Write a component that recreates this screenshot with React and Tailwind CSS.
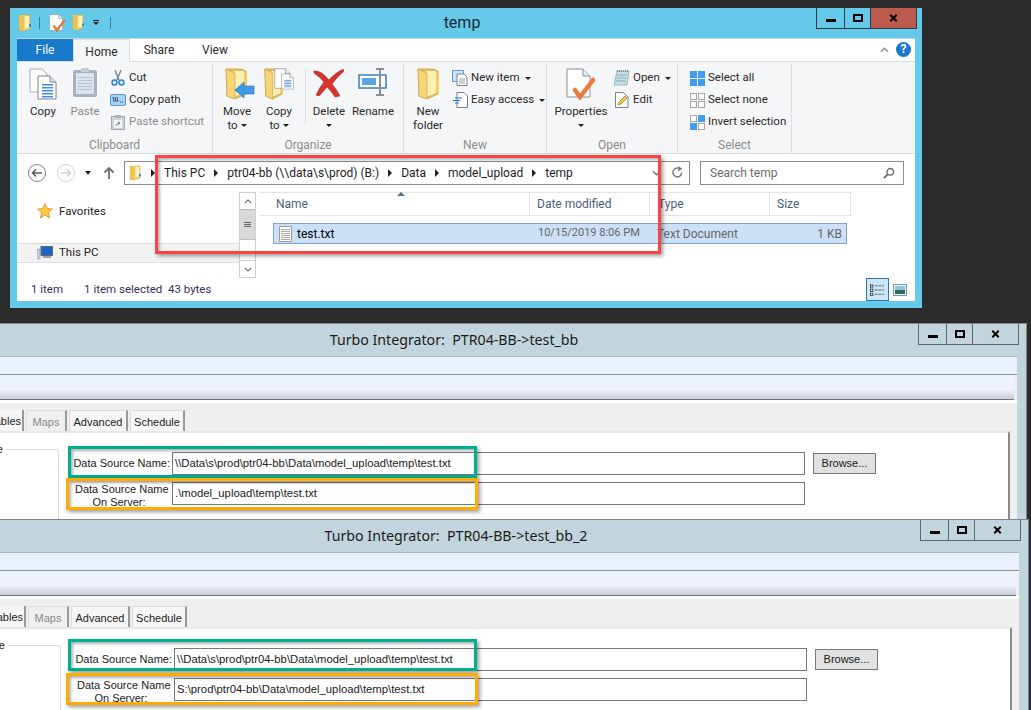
import React from 'react';

const Folder = ({ className = 'w-[23px] h-[32px]' }) => (
  <svg viewBox="0 0 23 32" preserveAspectRatio="none" className={className}>
    <path d="M1 1 H17 L21 3 V26 L10 31 L2 28 Z" fill="#e9bf57" stroke="#b58f35" strokeWidth="0.6" />
    <path d="M9 3 H19 V25 L9 29 Z" fill="#fdf0b4" />
    <path d="M1 1 L10 5 V31 L2 28 Z" fill="#f6d676" stroke="#c39c3e" strokeWidth="0.6" />
    <path d="M19 4 L22 6 V24 L19 25 Z" fill="#f3cf68" />
  </svg>
);

const SmallFolder = ({ className = 'w-[14px] h-[18px]' }) => (
  <svg viewBox="0 0 14 18" className={className}>
    <path d="M1 1 H12 V15 L5 17 L1 16 Z" fill="#f5d672" stroke="#c9a548" strokeWidth="0.5" />
    <path d="M1 1 L6 3 V17 L1 16 Z" fill="#edc352" />
    <path d="M7 2 H11 V13 L7 14 Z" fill="#fdf2bf" />
    <rect x="11" y="10" width="2" height="3" fill="#2f86d6" />
  </svg>
);

const Page = ({ className = 'w-[24px] h-[30px]', lines = true }) => (
  <svg viewBox="0 0 24 30" className={className}>
    <path d="M1 1 H16 L23 8 V29 H1 Z" fill="#fff" stroke="#8a8f96" />
    <path d="M16 1 V8 H23" fill="#e6e8ea" stroke="#8a8f96" />
    {lines && [12, 15, 18, 21, 24].map((y) => <rect key={y} x="6" y={y} width="13" height="1.5" fill="#4f8fd0" />)}
  </svg>
);

const CopyIcon = () => (
  <svg viewBox="0 0 28 32" className="w-[28px] h-[32px]">
    <path d="M1 1 H13 L18 6 V24 H1 Z" fill="#fdfdfd" stroke="#a9aeb4" />
    <path d="M9 8 H21 L27 14 V31 H9 Z" fill="#fff" stroke="#7f858c" />
    <path d="M21 8 V14 H27" fill="#e3e6e9" stroke="#7f858c" />
    {[16, 19, 22, 25, 28].map((y) => <rect key={y} x="13" y={y} width="11" height="1.5" fill="#3e8dd8" />)}
  </svg>
);

const Clipboard = () => (
  <svg viewBox="0 0 26 30" className="w-[26px] h-[30px]">
    <rect x="1" y="2" width="24" height="27" rx="2" fill="#a9b2c2" />
    <rect x="4" y="5" width="18" height="21" fill="#dde3ee" />
    {[9, 12, 15, 18, 21].map((y) => <rect key={y} x="6" y={y} width="14" height="1" fill="#b9c2d2" />)}
    <rect x="9" y="0" width="8" height="4" rx="1" fill="#c7ccd4" />
  </svg>
);

const Scissors = () => (
  <svg viewBox="0 0 16 16" className="w-[16px] h-[16px]">
    <path d="M5 0 L9 10 M11 0 L7 10" stroke="#7d848c" strokeWidth="1.4" />
    <circle cx="4.5" cy="12.5" r="2.5" fill="none" stroke="#2b7fd3" strokeWidth="1.4" />
    <circle cx="11.5" cy="12.5" r="2.5" fill="none" stroke="#2b7fd3" strokeWidth="1.4" />
  </svg>
);

const CopyPathIcon = () => (
  <svg viewBox="0 0 16 12" className="w-[16px] h-[12px]">
    <rect x="0.5" y="0.5" width="15" height="11" rx="1.5" fill="#a9d3fa" stroke="#4f97de" />
    <path d="M3 3 L4 8 M5 3 L6 8 M7 3 L8 8" stroke="#26384d" strokeWidth="0.9" />
    <path d="M10 8 H13.5" stroke="#26384d" strokeDasharray="1 1" />
  </svg>
);

const PasteShortcut = () => (
  <svg viewBox="0 0 14 15" className="w-[14px] h-[15px]">
    <rect x="0.5" y="1.5" width="13" height="13" fill="#cfd3d8" stroke="#a3a8ae" />
    <rect x="4" y="0" width="6" height="3" fill="#b0b5bb" />
    <rect x="3" y="5" width="8" height="8" fill="#f4f5f6" />
    <path d="M5 11 Q5 8 9 8 M7 6.5 L9 8 L7 9.5" stroke="#6f89a6" fill="none" />
  </svg>
);

const MoveIcon = () => (
  <div className="relative w-[32px] h-[32px] pl-[4px]">
    <Folder />
    <svg viewBox="0 0 20 16" className="absolute left-[14px] top-[14px] w-[20px] h-[16px]">
      <path d="M0 8 L9 0 V4 H19 V12 H9 V16 Z" fill="#3f9be6" stroke="#1f6fb7" strokeWidth="0.6" />
    </svg>
  </div>
);

const CopyToIcon = () => (
  <div className="relative w-[32px] h-[32px] pl-[1px]">
    <Folder className="w-[20px] h-[32px]" />
    <Page className="absolute left-[11px] top-[0px] w-[17px] h-[21px]" lines={false} />
    <Page className="absolute left-[18px] top-[5px] w-[13px] h-[17px]" />
  </div>
);

const DeleteIcon = () => (
  <svg viewBox="0 0 32 30" className="w-[32px] h-[30px]">
    <path d="M1 3 Q8 2 16 12 Q22 5 30 1 L31 3 Q24 9 19 16 Q24 22 27 28 L22 29 Q18 23 14 19 Q10 24 6 28 L3 27 Q6 20 11 14 Q6 8 1 5 Z" fill="#d9322c" stroke="#9c1f1b" strokeWidth="0.5" />
  </svg>
);

const RenameIcon = () => (
  <svg viewBox="0 0 30 28" className="w-[30px] h-[28px]">
    <rect x="1" y="7" width="27" height="13" fill="#fff" stroke="#2e77bd" strokeWidth="1.4" />
    <rect x="4" y="10" width="14" height="7" fill="#5aa5e3" />
    <path d="M18 1 H26 M22 1 V27 M18 27 H26" stroke="#8a8f94" strokeWidth="2" />
  </svg>
);

const NewItem = () => (
  <svg viewBox="0 0 16 16" className="w-[16px] h-[16px]">
    <rect x="0.5" y="0.5" width="11" height="11" fill="#cfe4fa" stroke="#5b9ad8" />
    <path d="M5 4 H12 L15 7 V15.5 H5 Z" fill="#fff" stroke="#7b8188" />
    <path d="M7 9 H13 M7 11 H13 M7 13 H13" stroke="#9aa0a6" />
  </svg>
);

const EasyAccess = () => (
  <svg viewBox="0 0 16 16" className="w-[16px] h-[16px]">
    <path d="M5 0.5 H12 L15.5 4 V15.5 H5 Z" fill="#fff" stroke="#7b8188" />
    <path d="M3 6 H10 M1 8.5 H8 M3 11 H7" stroke="#1a78d6" strokeWidth="1.2" />
  </svg>
);

const Properties = ({ className = 'w-[30px] h-[32px]' }) => (
  <svg viewBox="0 0 30 32" className={className}>
    <path d="M1 1 H17 L24 8 V29 H1 Z" fill="#fff" stroke="#8a8f96" />
    <path d="M17 1 V8 H24" fill="#e8eaec" stroke="#8a8f96" />
    <path d="M9 22 L14 29 L27 12" fill="none" stroke="#ea7c3f" strokeWidth="4.5" strokeLinecap="round" />
  </svg>
);

const Notepad = () => (
  <svg viewBox="0 0 16 16" className="w-[16px] h-[16px]">
    <path d="M3 1 H15 L13 15 H0 Z" fill="#c7e0e3" stroke="#7f9ea3" strokeWidth="0.7" />
    <path d="M3 5 H13 M2.5 8 H12.5 M2 11 H12" stroke="#6a9aa2" strokeWidth="0.7" />
    <path d="M3 1 H15" stroke="#555" strokeDasharray="1 1" />
  </svg>
);

const EditIcon = () => (
  <svg viewBox="0 0 14 16" className="w-[14px] h-[16px]">
    <path d="M0.5 0.5 H8 L13 5 V15.5 H0.5 Z" fill="#fff" stroke="#7b8188" />
    <path d="M3 13 L4 10 L10 4 L12 6 L6 12 Z" fill="#f3c544" stroke="#8a6a1e" strokeWidth="0.6" />
  </svg>
);

const SelectIcon = ({ on }) => (
  <svg viewBox="0 0 15 15" className="w-[15px] h-[15px]">
    {[[0, 0], [8, 0], [0, 8], [8, 8]].map(([x, y], i) => (
      <rect
        key={i}
        x={x + 0.5}
        y={y + 0.5}
        width="6"
        height="6"
        fill={on[i] ? '#3f9cf0' : '#fff'}
        stroke={on[i] ? '#3f9cf0' : '#a6a6a6'}
      />
    ))}
  </svg>
);

const Caret = ({ className = '' }) => <span className={`inline-block border-x-[3px] border-t-[3px] border-x-transparent border-t-[#222] align-middle ${className}`} />;

const LargeButton = ({ w, icon, label, second, caret, muted }) => (
  <div className={`${w} flex flex-col items-center shrink-0`}>
    <div className="h-[36px] flex items-start justify-center pt-[1px]">{icon}</div>
    <div className={`mt-[1px] text-[11.5px] leading-[13px] whitespace-nowrap pt-[1px] ${muted ? 'text-[#8b8b8b]' : 'text-[#2b2b2b]'}`}>{label}</div>
    {(second || caret) && (
      <div className="text-[11.5px] leading-[13px] mt-[1px] whitespace-nowrap text-[#2b2b2b]">
        {second}
        {caret && <Caret className={second ? 'ml-[3px]' : ''} />}
      </div>
    )}
  </div>
);

const SmallButton = ({ icon, label, caret, muted, iconW = 'w-[16px]' }) => (
  <div className="h-[22px] flex items-center gap-[3px] whitespace-nowrap">
    <div className={`${iconW} flex justify-center`}>{icon}</div>
    <span className={`text-[11.5px] ${muted ? 'text-[#8b8b8b]' : 'text-[#2b2b2b]'}`}>{label}</span>
    {caret && <Caret className="ml-[2px]" />}
  </div>
);

const RibbonGroup = ({ w, label, pad, children }) => (
  <div className={`${w} h-full flex flex-col border-r border-[#dcdee0] shrink-0`}>
    <div className={`flex-1 flex items-start pt-[3px] ${pad}`}>{children}</div>
    <div className="h-[16px] text-center text-[12px] leading-[16px] text-[#8c8c8c]">{label}</div>
  </div>
);

const Crumb = () => <span className="w-0 h-0 border-y-[4px] border-l-[4px] border-y-transparent border-l-[#222]" />;

const Explorer = () => (
  <div className="absolute left-[10px] top-[8px] w-[912px] h-[300px] bg-[#65c9ea] flex flex-col" style={{ fontFamily: 'Roboto, "Noto Sans", sans-serif' }}>
    <div className="relative h-[30px] shrink-0 flex items-start pl-[8px] pt-[6px]">
      <SmallFolder />
      <span className="w-px h-[12px] bg-[#3d7e98] ml-[7px] mt-[3px]" />
      <Properties className="w-[17px] h-[18px] ml-[9px]" />
      <SmallFolder className="w-[13px] h-[17px] ml-[6px]" />
      <span className="ml-[8px] mt-[6px] w-[6px] flex flex-col gap-[1px]">
        <span className="h-px bg-black" />
        <Caret />
      </span>
      <span className="w-px h-[12px] bg-[#3d7e98] ml-[11px] mt-[3px]" />
      <div className="absolute left-0 right-0 top-0 h-[29px] flex items-center justify-center text-[16px] text-[#1d2a33] pr-[8px]">temp</div>
      <div className="absolute right-[5px] top-0 h-[21px] flex border-x border-b border-[#2c3c46] text-black">
        <div className="w-[28px] bg-[#65c9ea] border-r border-[#2c3c46] flex items-center justify-center">
          <span className="w-[10px] h-[3px] bg-black mt-[4px]" />
        </div>
        <div className="w-[26px] bg-[#65c9ea] border-r border-[#2c3c46] flex items-center justify-center">
          <span className="w-[10px] h-[8px] border-2 border-black" />
        </div>
        <div className="w-[45px] bg-[#bc5a50] flex items-center justify-center">
          <svg viewBox="0 0 10 10" className="w-[9px] h-[8px]"><path d="M1 1 L9 9 M9 1 L1 9" stroke="#000" strokeWidth="2.4" /></svg>
        </div>
      </div>
    </div>

    <div className="mx-[7px] h-[263px] bg-white flex flex-col overflow-hidden border-t border-[#b9d6e3]">
      <div className="h-[23px] shrink-0 flex items-end border-b border-[#dadbdc] text-[12px] text-[#2b2b2b] relative">
        <div className="w-[56px] h-[23px] bg-[#1979ca] text-white flex items-center justify-center">File</div>
        <div className="w-[57px] h-[23px] pt-[1px] border-x border-t border-[#dadbdc] bg-[#f5f6f7] flex items-center justify-center -mb-px">Home</div>
        <div className="w-[58px] h-[23px] pt-[1px] flex items-center justify-center">Share</div>
        <div className="w-[54px] h-[23px] pt-[1px] flex items-center justify-center">View</div>
        <div className="ml-auto mr-[4px] flex items-center gap-[7px] h-[23px]">
          <svg viewBox="0 0 10 6" className="w-[9px] h-[6px]"><path d="M1 5 L5 1 L9 5" fill="none" stroke="#8f8f8f" strokeWidth="1.6" /></svg>
          <span className="w-[15px] h-[15px] rounded-full bg-[#1a78cf] text-white text-[12px] font-bold leading-[15px] text-center">?</span>
        </div>
      </div>

      <div className="h-[92px] shrink-0 bg-[#f5f6f7] border-b border-[#dadbdc] flex pt-[2px]">
        <RibbonGroup w="w-[196px]" label="Clipboard" pad="pl-[9px] gap-[8px]">
          <LargeButton w="w-[34px]" icon={<CopyIcon />} label="Copy" />
          <LargeButton w="w-[34px]" icon={<Clipboard />} label="Paste" muted />
          <div className="flex flex-col">
            <SmallButton icon={<Scissors />} label="Cut" />
            <SmallButton icon={<CopyPathIcon />} label="Copy path" />
            <SmallButton icon={<PasteShortcut />} label="Paste shortcut" muted />
          </div>
        </RibbonGroup>
        <RibbonGroup w="w-[191px]" label="Organize" pad="pl-[7px]">
          <LargeButton w="w-[34px]" icon={<MoveIcon />} label="Move" second="to" caret />
          <LargeButton w="w-[34px] ml-[8px]" icon={<CopyToIcon />} label="Copy" second="to" caret />
          <div className="w-px h-[55px] bg-[#dcdee0] ml-[9px] mt-[2px]" />
          <LargeButton w="w-[40px] ml-[3px]" icon={<DeleteIcon />} label="Delete" caret />
          <LargeButton w="w-[46px] ml-[1px]" icon={<RenameIcon />} label="Rename" />
        </RibbonGroup>
        <RibbonGroup w="w-[143px]" label="New" pad="pl-[4px]">
          <LargeButton w="w-[40px]" icon={<Folder />} label="New" second="folder" />
          <div className="flex flex-col ml-[4px]">
            <SmallButton icon={<NewItem />} label="New item" caret />
            <SmallButton icon={<EasyAccess />} label="Easy access" caret />
          </div>
        </RibbonGroup>
        <RibbonGroup w="w-[131px]" label="Open" pad="pl-[8px]">
          <LargeButton w="w-[52px]" icon={<Properties />} label="Properties" caret />
          <div className="flex flex-col ml-[7px]">
            <SmallButton icon={<Notepad />} label="Open" caret />
            <SmallButton icon={<EditIcon />} label="Edit" />
          </div>
        </RibbonGroup>
        <RibbonGroup w="w-[114px]" label="Select" pad="pl-[11px]">
          <div className="flex flex-col">
            <SmallButton icon={<SelectIcon on={[1, 1, 1, 1]} />} label="Select all" />
            <SmallButton icon={<SelectIcon on={[0, 0, 0, 0]} />} label="Select none" />
            <SmallButton icon={<SelectIcon on={[0, 1, 1, 0]} />} label="Invert selection" />
          </div>
        </RibbonGroup>
      </div>

      <div className="h-[38px] shrink-0 flex items-center pl-[10px] pb-[1px]">
        <svg viewBox="0 0 20 20" className="w-[20px] h-[20px]">
          <circle cx="10" cy="10" r="8.5" fill="#fff" stroke="#7f7f7f" />
          <path d="M15 10 H6 M9 6.5 L5.5 10 L9 13.5" fill="none" stroke="#5c5c5c" strokeWidth="1.6" />
        </svg>
        <svg viewBox="0 0 20 20" className="w-[20px] h-[20px] ml-[9px]">
          <circle cx="10" cy="10" r="8.5" fill="#fff" stroke="#d4d4d4" />
          <path d="M5 10 H14 M11 6.5 L14.5 10 L11 13.5" fill="none" stroke="#cfcfcf" strokeWidth="1.6" />
        </svg>
        <Caret className="ml-[9px] border-t-[#8a8a8a] border-x-[3.5px] border-t-[4px]" />
        <svg viewBox="0 0 12 14" className="w-[12px] h-[14px] ml-[12px]">
          <path d="M6 13 V2 M1.5 6.5 L6 2 L10.5 6.5" fill="none" stroke="#6f6f6f" strokeWidth="1.8" />
        </svg>
        <div className="ml-[9px] w-[566px] h-[24px] border border-[#8c8c8c] flex items-center pl-[4px] text-[12px] text-[#1e1e1e]">
          <SmallFolder className="w-[13px] h-[16px]" />
          <div className="ml-[9px] flex items-center gap-[9px] whitespace-nowrap">
            <Crumb />
            <span>This PC</span>
            <Crumb />
            <span>ptr04-bb (\\data\s\prod) (B:)</span>
            <Crumb />
            <span>Data</span>
            <Crumb />
            <span>model_upload</span>
            <Crumb />
            <span>temp</span>
          </div>
          <div className="ml-auto flex items-center gap-[10px] pr-[5px]">
            <svg viewBox="0 0 10 6" className="w-[9px] h-[6px]"><path d="M1 1 L5 5 L9 1" fill="none" stroke="#6f6f6f" strokeWidth="1.4" /></svg>
            <svg viewBox="0 0 14 14" className="w-[13px] h-[13px]">
              <path d="M11.5 7 A4.7 4.7 0 1 1 9 2.8" fill="none" stroke="#7a7a7a" strokeWidth="1.6" />
              <path d="M8 0 L12 3 L8 6 Z" fill="#7a7a7a" />
            </svg>
          </div>
        </div>
        <div className="ml-[10px] w-[204px] h-[24px] border border-[#8c8c8c] flex items-center justify-between pl-[9px] pr-[8px] text-[12px] text-[#6d6d6d]">
          <span>Search temp</span>
          <svg viewBox="0 0 14 14" className="w-[12px] h-[12px]">
            <circle cx="8.5" cy="5.5" r="3.8" fill="none" stroke="#6f6f6f" strokeWidth="1.6" />
            <path d="M5.5 8.5 L1 13" stroke="#6f6f6f" strokeWidth="2.2" />
          </svg>
        </div>
      </div>

      <div className="h-[86px] shrink-0 flex text-[12px]">
        <div className="w-[222px] shrink-0 flex flex-col text-[11.5px]">
          <div className="h-[51px] flex items-start pl-[20px] pt-[11px] gap-[6px] text-[#1e1e1e]">
            <svg viewBox="0 0 16 16" className="w-[16px] h-[16px]">
              <path d="M8 0.5 L10.2 5.6 L15.5 6 L11.4 9.5 L12.7 15 L8 12 L3.3 15 L4.6 9.5 L0.5 6 L5.8 5.6 Z" fill="#fbc944" stroke="#e08a1e" strokeWidth="0.8" />
            </svg>
            <span>Favorites</span>
          </div>
          <div className="h-[20px] bg-[#f2f2f2] border-y border-[#dedede] flex items-center pl-[20px] gap-[6px] text-[#1e1e1e]">
            <svg viewBox="0 0 16 14" className="w-[16px] h-[14px]">
              <rect x="0" y="3" width="3" height="10" fill="#c9ced3" stroke="#8a9096" strokeWidth="0.5" />
              <rect x="4" y="0.5" width="11.5" height="9" fill="#1d63c6" stroke="#5e6a75" />
              <rect x="6" y="10" width="8" height="2" fill="#9aa2aa" />
            </svg>
            <span>This PC</span>
          </div>
        </div>
        <div className="w-[17px] shrink-0 border border-[#cfcfcf] flex flex-col">
          <div className="h-[16px] flex items-center justify-center">
            <svg viewBox="0 0 10 6" className="w-[8px] h-[5px]"><path d="M1 5 L5 1 L9 5" fill="none" stroke="#606060" strokeWidth="1.3" /></svg>
          </div>
          <div className="h-[31px] bg-[#d9d9d9] border-y border-[#bdbdbd] flex flex-col items-center justify-center gap-[1px]">
            <span className="w-[7px] h-px bg-[#606060]" /><span className="w-[7px] h-px bg-[#606060]" /><span className="w-[7px] h-px bg-[#606060]" />
          </div>
          <div className="flex-1 border-b border-[#cfcfcf]" />
          <div className="h-[16px] flex items-center justify-center">
            <svg viewBox="0 0 10 6" className="w-[8px] h-[5px]"><path d="M1 1 L5 5 L9 1" fill="none" stroke="#606060" strokeWidth="1.3" /></svg>
          </div>
        </div>
        <div className="ml-[3px] flex-1 relative">
          <div className="w-[592px] h-[24px] border-y border-[#e5e5e5] grid grid-cols-[271px_120px_120px_81px] text-[#4c607a]">
            <div className="border-r border-[#e5e5e5] flex items-center pl-[17px]">Name</div>
            <div className="border-r border-[#e5e5e5] flex items-center pl-[7px]">Date modified</div>
            <div className="border-r border-[#e5e5e5] flex items-center pl-[8px]">Type</div>
            <div className="border-r border-[#e5e5e5] flex items-center pl-[7px]">Size</div>
          </div>
          <span className="absolute left-[138px] top-[0px] w-0 h-0 border-x-[4px] border-b-[4px] border-x-transparent border-b-[#5a6b82]" />
          <div className="ml-[14px] mt-[7px] w-[574px] h-[21px] bg-[#cce0f8] border border-[#7da2ce] grid grid-cols-[257px_120px_120px_75px] items-center">
            <div className="flex items-center pl-[5px] gap-[5px] text-black">
              <svg viewBox="0 0 13 16" className="w-[13px] h-[16px]">
                <path d="M0.5 0.5 H12.5 V15.5 H0.5 Z" fill="#fff" stroke="#9a9a9a" />
                {[3, 5, 7, 9, 11, 13].map((y) => <path key={y} d={`M2 ${y + 0.5} H11`} stroke="#a8a8a8" />)}
              </svg>
              <span>test.txt</span>
            </div>
            <div className="pl-[7px] text-[11px] text-[#666]">10/15/2019 8:06 PM</div>
            <div className="pl-[6px] text-[#666]">Text Document</div>
            <div className="text-right pr-[4px] text-[#666]">1 KB</div>
          </div>
        </div>
      </div>

      <div className="flex-1 flex items-end relative text-[11.5px] text-[#3b2f63]">
        <div className="h-[23px] flex items-center pl-[14px]">
          <span>1 item</span>
          <span className="ml-[21px]">1 item selected&nbsp;&nbsp;43 bytes</span>
        </div>
        <div className="ml-auto mr-[8px] h-[23px] flex items-center gap-[4px]">
          <div className="w-[23px] h-[23px] bg-[#cde6f7] border border-[#2f7aa8] flex items-center justify-center">
            <svg viewBox="0 0 16 12" className="w-[15px] h-[12px]">
              {[0, 4.5, 9].map((y) => <g key={y}><rect x="0.5" y={y + 0.5} width="2.5" height="2.5" fill="#fff" stroke="#444" /><path d={`M5 ${y + 1.5} H15`} stroke="#555" strokeDasharray="3 1" /></g>)}
            </svg>
          </div>
          <svg viewBox="0 0 14 12" className="w-[14px] h-[12px]">
            <rect x="0.5" y="0.5" width="13" height="11" fill="#e8f1f5" stroke="#7b98a8" />
            <rect x="2" y="2" width="10" height="4" fill="#8fc6e4" />
            <rect x="2" y="6" width="10" height="4" fill="#2f6b57" />
          </svg>
        </div>
      </div>
    </div>
  </div>
);

const TiWindow = ({ top, left, title, value, h }) => (
  <div
    className={`absolute ${top} ${left} w-[1145px] ${h} bg-[#c3d5dc] border-t border-[#5f6a70] border-r border-[#7b858a] flex flex-col overflow-hidden`}
    style={{ fontFamily: '"Liberation Sans", Arial, sans-serif' }}
  >
    <div className="relative h-[32px] shrink-0 flex items-center justify-center text-[14.2px] text-[#1b1b1b] whitespace-pre" style={{ fontFamily: '"Noto Sans", sans-serif' }}>
      {title}
      <div className="absolute right-[7px] top-0 h-[21px] flex border-x border-b border-[#5d666b] text-black">
        <div className="w-[28px] border-r border-[#5d666b] flex items-center justify-center">
          <span className="w-[10px] h-[3px] bg-black mt-[4px]" />
        </div>
        <div className="w-[26px] border-r border-[#5d666b] flex items-center justify-center">
          <span className="w-[10px] h-[8px] border-2 border-black" />
        </div>
        <div className="w-[45px] flex items-center justify-center">
          <svg viewBox="0 0 10 10" className="w-[9px] h-[8px]"><path d="M1 1 L9 9 M9 1 L1 9" stroke="#000" strokeWidth="2.4" /></svg>
        </div>
      </div>
    </div>
    <div className="mr-[9px] flex-1 flex flex-col bg-[#efefef] border-t border-[#aab6bb]">
      <div className="h-[18px] shrink-0 bg-[#ebf1fa] border-b border-[#8e9498]" />
      <div className="h-[25px] shrink-0 mr-[3px] bg-gradient-to-b from-[#eff4fa] from-60% to-[#c9ced6] border-b border-[#6d747c]" />
      <div className="h-[3px] shrink-0 bg-white" />
      <div className="h-[28px] shrink-0 flex items-end pl-[92px] gap-[2px] text-[11px] text-[#222]">
        <div className="w-[50px] h-[21px] pl-[2px] pt-[2px] bg-[#f6f6f6] border-r-2 border-[#999] flex items-center whitespace-nowrap">Variables</div>
        <div className="w-[41px] h-[21px] pt-[2px] bg-[#f0f0f0] border-l border-t border-[#dcdcdc] border-r-2 border-r-[#999] flex items-center justify-center text-[#8a8a8a]">Maps</div>
        <div className="w-[59px] h-[21px] pt-[2px] bg-[#f6f6f6] border-l border-t border-[#dcdcdc] border-r-2 border-r-[#999] flex items-center justify-center">Advanced</div>
        <div className="w-[55px] h-[21px] pt-[2px] bg-[#f6f6f6] border-l border-t border-[#dcdcdc] border-r-2 border-r-[#999] flex items-center justify-center">Schedule</div>
      </div>
      <div className="flex-1 mr-[7px] bg-white border-t-2 border-[#e8e8e8] border-r-2 border-r-[#8a8a8a] flex items-start text-[11px] text-[#1b1b1b]">
        <div className="w-[177px] h-[300px] mt-[16px] shrink-0 border border-[#dcdcdc] rounded-[3px] relative">
          <span className="absolute right-[52px] -top-[8px] bg-white pl-[2px] pr-[3px] leading-[14px] whitespace-nowrap">Data Source Type</span>
        </div>
        <div className="ml-[16px] mt-[19px] w-[96px] text-center leading-[13px]">
          <div className="h-[23px] flex items-center justify-end whitespace-nowrap pr-[1px]">Data Source Name:</div>
          <div className="mt-[8px] h-[26px] pr-[8px] whitespace-nowrap">Data Source Name<br />On Server:</div>
        </div>
        <div className="ml-[1px] mt-[19px] w-[633px] shrink-0 flex flex-col gap-[7px] text-[11.3px]">
          <div className="h-[23px] border border-[#777] pl-[2px] pb-[1px] flex items-center whitespace-nowrap">\\Data\s\prod\ptr04-bb\Data\model_upload\temp\test.txt</div>
          <div className="h-[23px] border border-[#777] pl-[2px] pb-[1px] flex items-center whitespace-nowrap">{value}</div>
        </div>
        <div className="ml-[8px] mt-[20px] w-[63px] h-[21px] bg-[#e1e1e1] border border-[#777] flex items-center justify-center">Browse...</div>
      </div>
    </div>
  </div>
);

const Callout = ({ className }) => (
  <div className={`absolute border-[3px] shadow-[2px_2px_4px_rgba(0,0,0,0.4),inset_2px_2px_3px_rgba(0,0,0,0.3)] ${className}`} />
);

export default function App() {
  return (
    <div className="relative w-[1031px] h-[710px] bg-[#2b2b2b] overflow-hidden">
      <Explorer />
      <TiWindow top="top-[323px]" left="left-[-118px]" h="h-[196px]" title="Turbo Integrator:  PTR04-BB->test_bb" value=".\model_upload\temp\test.txt" />
      <Callout className="left-[68px] top-[446px] w-[409px] h-[32px] border-[#00ae91]" />
      <Callout className="left-[66px] top-[478px] w-[412px] h-[32px] border-[#ffab00]" />
      <TiWindow top="top-[519px]" left="left-[-116px]" h="h-[200px]" title="Turbo Integrator:  PTR04-BB->test_bb_2" value="S:\prod\ptr04-bb\Data\model_upload\temp\test.txt" />
      <Callout className="left-[68px] top-[639px] w-[409px] h-[32px] border-[#00ae91]" />
      <Callout className="left-[66px] top-[673px] w-[412px] h-[32px] border-[#ffab00]" />
      <Callout className="left-[155px] top-[155px] w-[506px] h-[99px] border-[#f84444]" />
    </div>
  );
}
